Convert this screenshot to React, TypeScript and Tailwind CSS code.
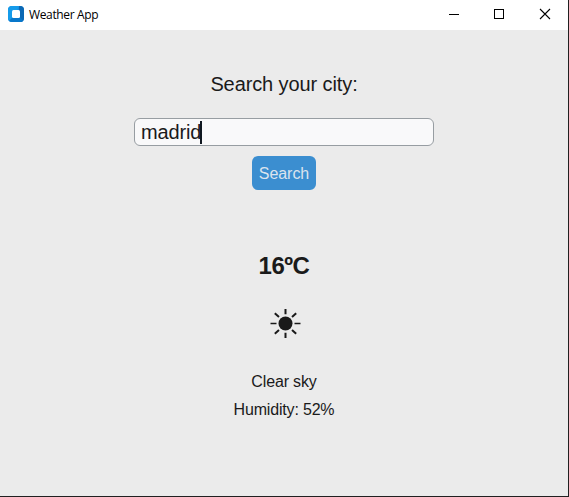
import React from "react";

function AppLogo() {
  return (
    <svg width="16" height="16" viewBox="0 0 16 16" aria-hidden="true">
      <defs>
        <clipPath id="logo-shape">
          <rect width="16" height="16" rx="4" />
        </clipPath>
      </defs>
      <g clipPath="url(#logo-shape)">
        <rect width="16" height="16" fill="#168ae0" />
        <path d="M0 0H11L8 8L0 16Z" fill="#159bea" />
        <path d="M11 0H16V16H11V5Z" fill="#0b68b4" />
        <path d="M0 16L5 11H12L16 16Z" fill="#0877ca" />
      </g>
      <rect x="4" y="4" width="8" height="8" rx="1.5" fill="#fff" />
    </svg>
  );
}

function TitleBar() {
  return (
    <header className="flex h-[30px] shrink-0 items-center bg-white pl-2 text-black">
      <div className="-mt-[2px]">
        <AppLogo />
      </div>
      <h1 className="ml-[5px] flex-1 font-['Open_Sans','Noto_Sans',sans-serif] text-[12px] leading-4 tracking-[-0.35px]">
        Weather App
      </h1>
      <div className="flex h-full">
        <button aria-label="Minimize" className="w-[46px]">
          <svg width="46" height="30" shapeRendering="crispEdges">
            <path d="M18 14.5H28" stroke="#000" />
          </svg>
        </button>
        <button aria-label="Maximize" className="w-[46px]">
          <svg width="46" height="30" shapeRendering="crispEdges">
            <rect x="17.5" y="9.5" width="9" height="9" fill="none" stroke="#000" />
          </svg>
        </button>
        <button aria-label="Close" className="w-[45px]">
          <svg width="45" height="30">
            <path d="M17 9L27 19M27 9L17 19" stroke="#000" strokeWidth="1.1" />
          </svg>
        </button>
      </div>
    </header>
  );
}

function SunIcon() {
  return (
    <svg width="32" height="32" viewBox="0 0 32 32" role="img" aria-label="Clear sky" stroke="#1a1a1a">
      <circle cx="15.5" cy="16.5" r="7" fill="#1a1a1a" stroke="none" />
      <path d="M0.5 16.5H6.5M24.5 16.5H30.5" strokeWidth="1.4" />
      <path d="M15.5 2V7.2M15.5 25.8V31" strokeWidth="2" />
      <path d="M4.8 6.2L9 10M26.2 6.2L22 10M4.8 26.8L9 23M26.2 26.8L22 23" strokeWidth="2" />
    </svg>
  );
}

export default function App() {
  return (
    <div className="flex h-[497px] w-[569px] flex-col border-r border-b border-[#202020] bg-[#ebebeb] font-['Liberation_Sans',Arial,sans-serif] text-[#1a1a1a]">
      <TitleBar />
      <main className="flex flex-1 flex-col items-center">
        <p className="mt-[42px] text-[20px] leading-6 tracking-[-0.1px]">Search your city:</p>
        <div className="mt-[22px] flex h-7 w-[300px] items-center rounded-[6px] border border-[#979da2] bg-[#f9f9fa] pl-[6px] text-[20px] leading-6">
          <span className="tracking-[-0.15px]">madrid</span>
          <span className="-ml-px h-[23px] w-[2px] bg-[#101820]" />
        </div>
        <button className="mt-[10px] h-[34px] w-16 rounded-[6px] bg-[#3b8ed0] pt-[2px] text-[16px] leading-5 tracking-[-0.05px] text-[#dce4ee]">
          Search
        </button>
        <p className="mt-[62px] text-[24px] leading-7 font-bold tracking-[-0.5px]">16ºC</p>
        <div className="mt-[27px] ml-[3px]">
          <SunIcon />
        </div>
        <p className="mt-[33px] text-[16px] leading-5 tracking-[-0.15px]">Clear sky</p>
        <p className="mt-2 text-[16px] leading-5 tracking-[-0.18px]">Humidity: 52%</p>
      </main>
    </div>
  );
}
